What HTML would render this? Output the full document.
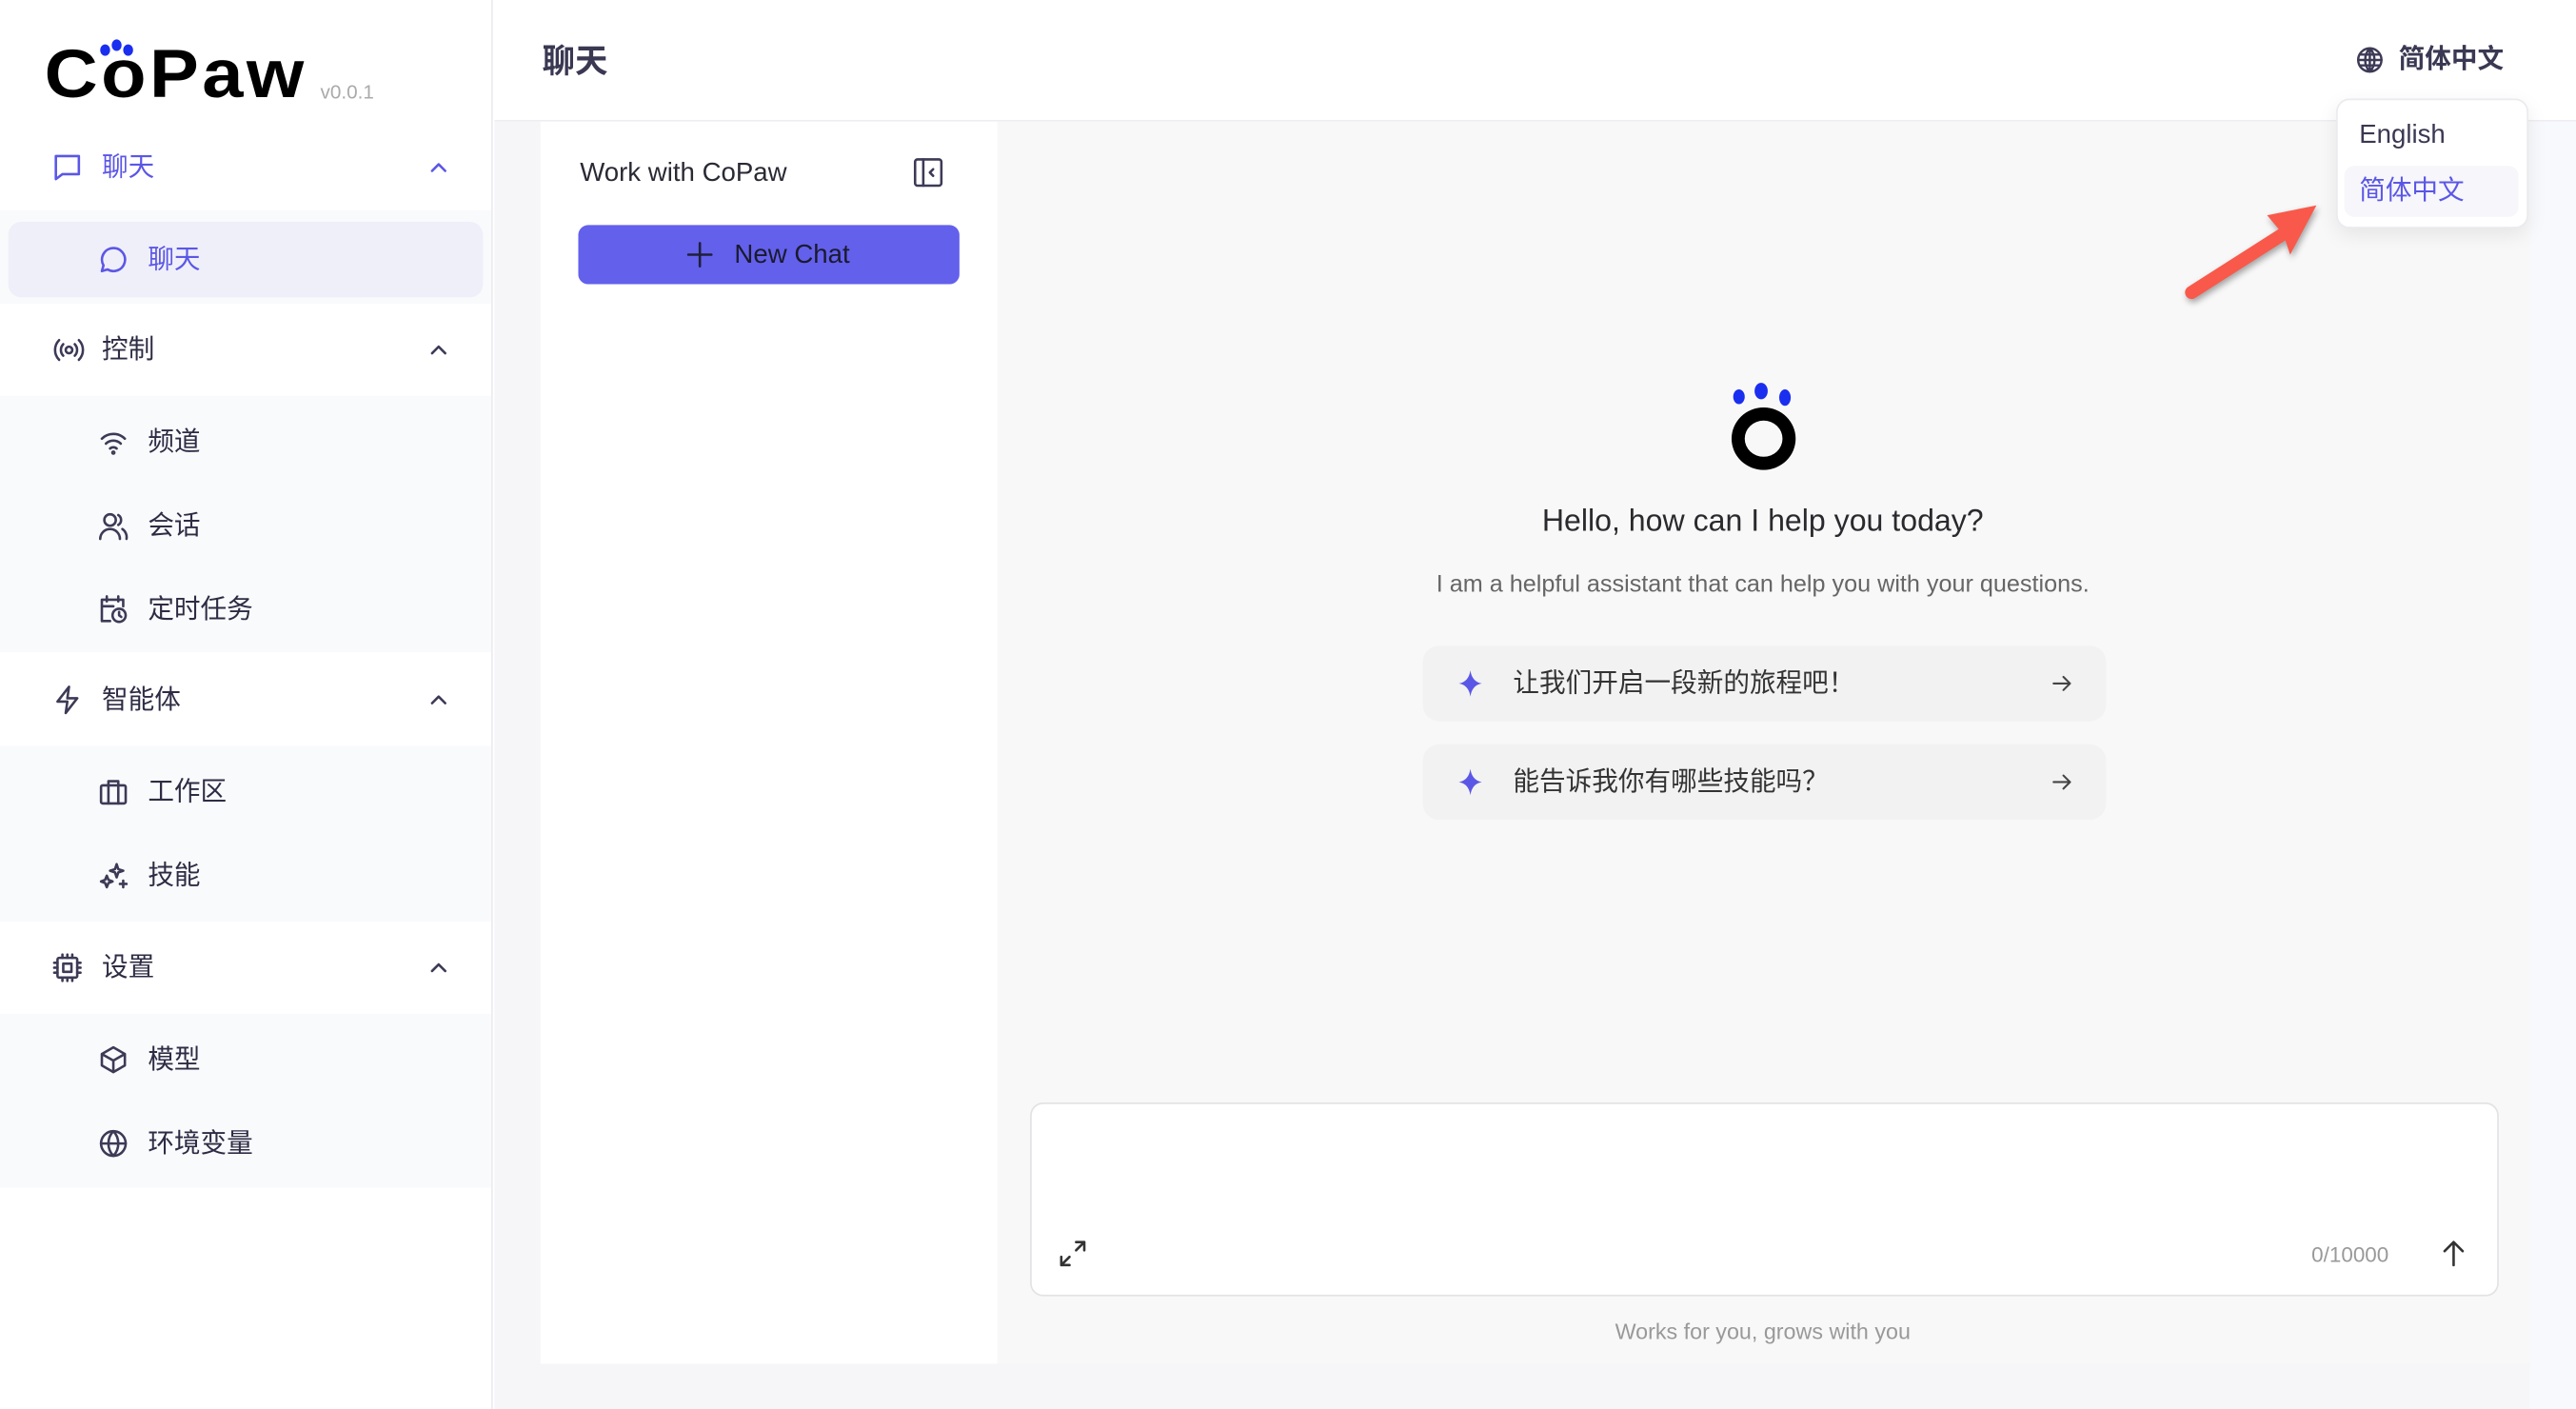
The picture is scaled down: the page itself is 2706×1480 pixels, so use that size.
<!DOCTYPE html>
<html><head><meta charset="utf-8"><style>
*{margin:0;padding:0;box-sizing:border-box}
html,body{width:2706px;height:1480px;overflow:hidden;background:#fff}
#r{width:1568px;height:858px;transform:scale(1.72577);transform-origin:0 0;position:relative;font-family:"Liberation Sans","Noto Sans CJK SC",sans-serif;color:#2a2a3e}
.a{position:absolute}
.t{position:absolute;white-space:nowrap;line-height:1}
.ic{position:absolute;fill:none;stroke:#3d3a56;stroke-width:1.5;stroke-linecap:round;stroke-linejoin:round}
.mi{font-size:16px;color:#2e2c44}
</style></head><body><div id="r">
<!-- sidebar -->
<div class="a" style="left:0;top:0;width:300px;height:858px;background:#fff;border-right:1px solid #ececf0"></div>
<div class="t" style="left:27px;top:24px;font-size:45px;font-weight:700;color:#000;letter-spacing:2px;transform:scaleY(0.92);transform-origin:0 0">CoPaw</div>
<div class="a" style="left:61px;top:27px;width:6px;height:7px;border-radius:50%;background:#1a2ef0"></div>
<div class="a" style="left:68px;top:24px;width:6px;height:7px;border-radius:50%;background:#1a2ef0"></div>
<div class="a" style="left:75px;top:27px;width:6px;height:7px;border-radius:50%;background:#1a2ef0"></div>
<div class="t" style="left:195px;top:50px;font-size:12px;color:#aaa">v0.0.1</div>

<div class="a" style="left:0;top:128px;width:299px;height:57px;background:#f9fafc"></div>
<div class="a" style="left:5px;top:135px;width:289px;height:46px;border-radius:8px;background:#efeff9"></div>
<div class="a" style="left:0;top:241px;width:299px;height:156px;background:#f9fafc"></div>
<div class="a" style="left:0;top:454px;width:299px;height:107px;background:#f9fafc"></div>
<div class="a" style="left:0;top:617px;width:299px;height:106px;background:#f9fafc"></div>

<svg class="ic" style="left:32px;top:93px;stroke:#5b57e6" width="18" height="18" viewBox="0 0 18 18"><path d="M2 2h14v11H6l-4 3z"/></svg>
<div class="t mi" style="left:62px;top:95px;color:#5b57e6">聊天</div>
<svg class="ic" style="left:261px;top:97px;stroke:#5b57e6" width="12" height="10"><path d="M2 7l4-4 4 4"/></svg>
<svg class="ic" style="left:60px;top:149px;stroke:#5b57e6" width="18" height="18" viewBox="0 0 18 18"><path d="M9 2a7 7 0 1 1-3.5 13L2 16l1-3.5A7 7 0 0 1 9 2z"/></svg>
<div class="t mi" style="left:90px;top:151px;color:#5b57e6">聊天</div>

<svg class="ic" style="left:32px;top:204px" width="20" height="18" viewBox="0 0 20 18"><circle cx="10" cy="9" r="2"/><path d="M6.5 5.5a5 5 0 0 0 0 7M13.5 5.5a5 5 0 0 1 0 7M4 3a8.5 8.5 0 0 0 0 12M16 3a8.5 8.5 0 0 1 0 12"/></svg>
<div class="t mi" style="left:62px;top:206px">控制</div>
<svg class="ic" style="left:261px;top:208px" width="12" height="10"><path d="M2 7l4-4 4 4"/></svg>
<svg class="ic" style="left:60px;top:260px" width="18" height="18" viewBox="0 0 18 18"><path d="M2 7a10 10 0 0 1 14 0M4.5 10a6.5 6.5 0 0 1 9 0M7 13a3 3 0 0 1 4 0"/><circle cx="9" cy="15.5" r=".6"/></svg>
<div class="t mi" style="left:90px;top:262px">频道</div>
<svg class="ic" style="left:60px;top:311px" width="18" height="18" viewBox="0 0 18 18"><circle cx="7" cy="5.5" r="3.5"/><path d="M1 17a6 6 0 0 1 12 0M12 2.5a3.5 3.5 0 0 1 0 6M14.5 11a6 6 0 0 1 2.5 6"/></svg>
<div class="t mi" style="left:90px;top:313px">会话</div>
<svg class="ic" style="left:60px;top:362px" width="18" height="18" viewBox="0 0 18 18"><path d="M7 16H2V3h13v4M2 7h7M5 1v3M12 1v3"/><circle cx="12.5" cy="12.5" r="4"/><path d="M12.5 10.5v2l1.3 1"/></svg>
<div class="t mi" style="left:90px;top:364px">定时任务</div>

<svg class="ic" style="left:32px;top:417px" width="18" height="18" viewBox="0 0 18 18"><path d="M10 1L3 10h6l-1 7 7-9H9z"/></svg>
<div class="t mi" style="left:62px;top:419px">智能体</div>
<svg class="ic" style="left:261px;top:421px" width="12" height="10"><path d="M2 7l4-4 4 4"/></svg>
<svg class="ic" style="left:60px;top:473px" width="18" height="18" viewBox="0 0 18 18"><rect x="1.5" y="5" width="15" height="11" rx="1"/><path d="M6 5V2.5h6V5M6 5v11M12 5v11"/></svg>
<div class="t mi" style="left:90px;top:475px">工作区</div>
<svg class="ic" style="left:60px;top:524px" width="18" height="18" viewBox="0 0 18 18"><path d="M11 2l1 3 3 1-3 1-1 3-1-3-3-1 3-1zM5 9l1 2.5 2.5 1-2.5 1L5 16l-1-2.5-2.5-1 2.5-1zM15 12v4M13 14h4"/></svg>
<div class="t mi" style="left:90px;top:526px">技能</div>

<svg class="ic" style="left:32px;top:580px" width="18" height="18" viewBox="0 0 18 18"><rect x="3" y="3" width="12" height="12" rx="1"/><rect x="6.5" y="6.5" width="5" height="5"/><path d="M6 1v2M9 1v2M12 1v2M6 15v2M9 15v2M12 15v2M1 6h2M1 9h2M1 12h2M15 6h2M15 9h2M15 12h2"/></svg>
<div class="t mi" style="left:62px;top:582px">设置</div>
<svg class="ic" style="left:261px;top:584px" width="12" height="10"><path d="M2 7l4-4 4 4"/></svg>
<svg class="ic" style="left:60px;top:636px" width="18" height="18" viewBox="0 0 18 18"><path d="M9 1.5l7 4v7l-7 4-7-4v-7zM2 5.5l7 4 7-4M9 9.5v7"/></svg>
<div class="t mi" style="left:90px;top:638px">模型</div>
<svg class="ic" style="left:60px;top:687px" width="18" height="18" viewBox="0 0 18 18"><circle cx="9" cy="9" r="7.5"/><path d="M1.5 9h15M9 1.5c-4 4-4 11 0 15M9 1.5c4 4 4 11 0 15"/></svg>
<div class="t mi" style="left:90px;top:689px">环境变量</div>

<!-- header -->
<div class="a" style="left:301px;top:73px;width:1267px;height:1px;background:#eeeef2"></div>
<div class="t" style="left:330px;top:28px;font-size:20px;font-weight:700;color:#3a3852">聊天</div>
<svg class="ic" style="left:1434px;top:28px" width="17" height="17" viewBox="0 0 18 18"><circle cx="9" cy="9" r="7.5"/><path d="M1.5 9h15M2.5 5.5h13M2.5 12.5h13M9 1.5c-4 4-4 11 0 15M9 1.5c4 4 4 11 0 15M9 1.5v15"/></svg>
<div class="t" style="left:1460px;top:29px;font-size:16px;font-weight:700;color:#3a3852">简体中文</div>

<!-- content -->
<div class="a" style="left:301px;top:74px;width:1267px;height:784px;background:#f6f6f8"></div>
<div class="a" style="left:329px;top:74px;width:278px;height:756px;background:#fff"></div>
<div class="t" style="left:353px;top:98px;font-size:16px;color:#2a2a35">Work with CoPaw</div>
<svg class="ic" style="left:556px;top:96px" width="18" height="18" viewBox="0 0 18 18"><rect x="1" y="1" width="16" height="16" rx="1.5"/><path d="M6 1v16M12 7l-2 2 2 2"/></svg>
<div class="a" style="left:352px;top:137px;width:232px;height:36px;background:#6360ec;border-radius:6px"></div>
<svg class="ic" style="left:418px;top:147px;stroke:#1f1f3a" width="16" height="16"><path d="M8 1v14M1 8h14"/></svg>
<div class="t" style="left:447px;top:148px;font-size:16px;color:#1a1a2e">New Chat</div>

<div class="a" style="left:607px;top:74px;width:933px;height:756px;background:#f8f8f8"></div>
<div class="a" style="left:1540px;top:74px;width:28px;height:784px;background:#f8f9fd"></div>

<!-- welcome -->
<div class="a" style="left:1055px;top:237px;width:7px;height:9px;border-radius:50%;background:#1a2ef0"></div>
<div class="a" style="left:1068px;top:233px;width:8px;height:10px;border-radius:50%;background:#1a2ef0"></div>
<div class="a" style="left:1083px;top:237px;width:7px;height:10px;border-radius:50%;background:#1a2ef0"></div>
<div class="a" style="left:1054px;top:248px;width:39px;height:38px;border-radius:50%;border:8px solid #000"></div>
<div class="t" style="left:0;width:2146px;text-align:center;top:308px;font-size:18.6px;color:#2a2a2e">Hello, how can I help you today?</div>
<div class="t" style="left:0;width:2146px;text-align:center;top:349px;font-size:14.6px;color:#666">I am a helpful assistant that can help you with your questions.</div>
<div class="a" style="left:866px;top:393px;width:416px;height:46px;border-radius:10px;background:#f2f2f3"></div>
<div class="a" style="left:866px;top:453px;width:416px;height:46px;border-radius:10px;background:#f2f2f3"></div>
<svg class="a" style="left:888px;top:408px" width="14" height="16"><path d="M7 0Q8 7 14 8Q8 9 7 16Q6 9 0 8Q6 7 7 0z" fill="#5b57e6"/></svg>
<svg class="a" style="left:888px;top:468px" width="14" height="16"><path d="M7 0Q8 7 14 8Q8 9 7 16Q6 9 0 8Q6 7 7 0z" fill="#5b57e6"/></svg>
<div class="t" style="left:921px;top:409px;font-size:16px;color:#333">让我们开启一段新的旅程吧！</div>
<div class="t" style="left:921px;top:469px;font-size:16px;color:#333">能告诉我你有哪些技能吗？</div>
<svg class="ic" style="left:1249px;top:410px;stroke:#444;stroke-width:1.2" width="12" height="12"><path d="M1 6h10M7 2l4 4-4 4"/></svg>
<svg class="ic" style="left:1249px;top:470px;stroke:#444;stroke-width:1.2" width="12" height="12"><path d="M1 6h10M7 2l4 4-4 4"/></svg>

<!-- input -->
<div class="a" style="left:627px;top:671px;width:894px;height:118px;background:#fff;border:1px solid #e3e3e6;border-radius:8px"></div>
<svg class="ic" style="left:644px;top:754px;stroke:#333" width="18" height="18"><path d="M11 2h5v5M16 2l-5 5M7 16H2v-5M2 16l5-5"/></svg>
<div class="t" style="left:1407px;top:757px;font-size:13px;color:#999">0/10000</div>
<svg class="ic" style="left:1486px;top:755px;stroke:#333" width="15" height="16"><path d="M7.5 15V1M2 6.5l5.5-5.5 5.5 5.5"/></svg>
<div class="t" style="left:0;width:2146px;text-align:center;top:804px;font-size:13.5px;color:#999">Works for you, grows with you</div>

<!-- dropdown -->
<div class="a" style="left:1422px;top:60px;width:117px;height:79px;background:#fff;border:1px solid #ebebef;border-radius:8px;box-shadow:0 4px 12px rgba(0,0,0,.08)"></div>
<div class="t" style="left:1436px;top:75px;font-size:16px;color:#3a3852">English</div>
<div class="a" style="left:1427px;top:101px;width:106px;height:31px;background:#f6f6fb;border-radius:6px"></div>
<div class="t" style="left:1436px;top:109px;font-size:16px;color:#5b57e6">简体中文</div>

<!-- red arrow -->
<svg class="a" style="left:1320px;top:115px;overflow:visible" width="100" height="80"><g style="filter:drop-shadow(1px 2px 2px rgba(0,0,0,.35))"><path d="M14 63L72 26" stroke="#f9594a" stroke-width="8" stroke-linecap="round"/><path d="M60 16L90 10 74 40 70 28z" fill="#f9594a"/></g></svg>
</div></body></html>
